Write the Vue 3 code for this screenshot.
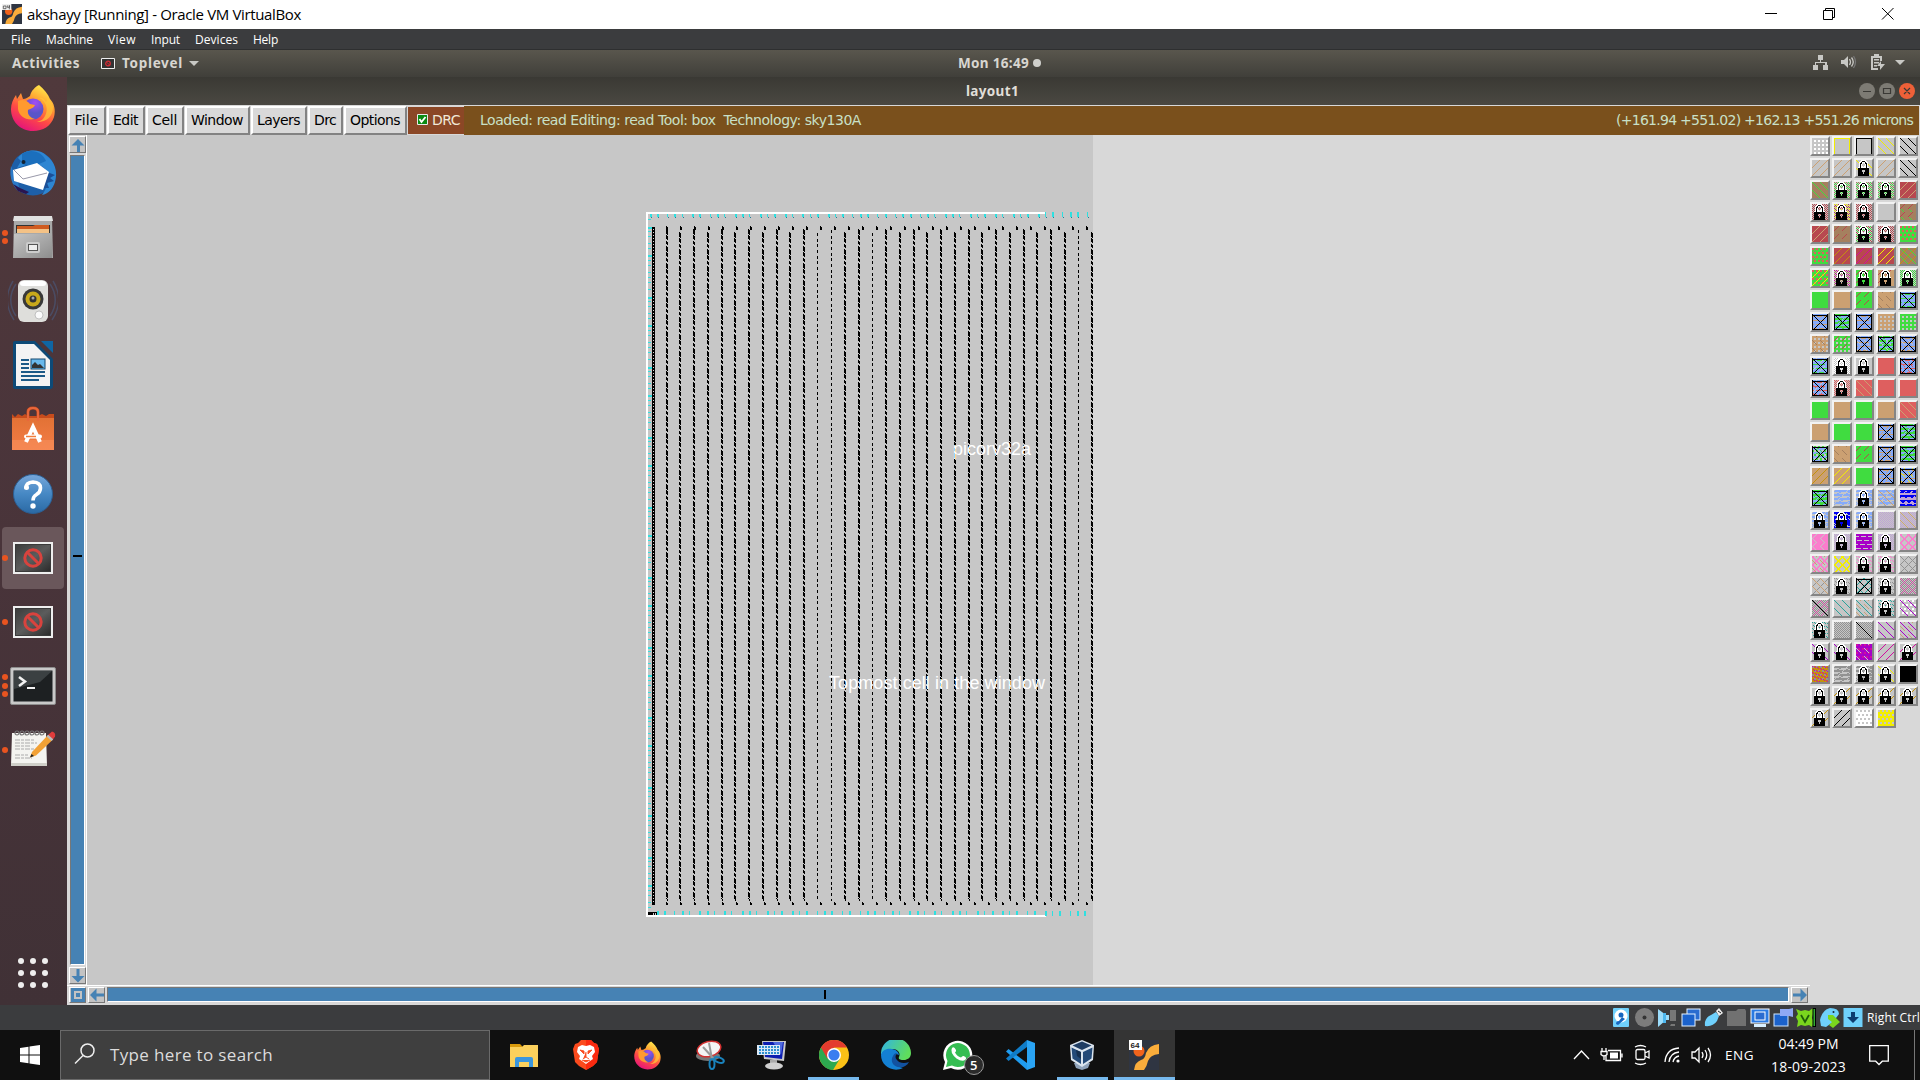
<script setup>
// Sets the letter spacing so a label fills its slot exactly
const vFit = {
  mounted(el, { value }) {
    const natural = el.getBoundingClientRect().width
    el.style.letterSpacing = (value - natural) / el.textContent.length + 'px'
  },
}

const vmMenu = [['File', 20], ['Machine', 47], ['View', 28], ['Input', 29], ['Devices', 43], ['Help', 25]]
const toolMenu = [['File', 38, 24], ['Edit', 38, 25], ['Cell', 38, 25], ['Window', 65, 52], ['Layers', 56, 43], ['Drc', 35, 22], ['Options', 63, 50]]

const firefox = `<svg viewBox="0 0 48 48"><defs><linearGradient id="ff1" x1=".8" y1="0" x2=".3" y2="1"><stop offset="0" stop-color="#fff44f"/><stop offset=".35" stop-color="#ffa030"/><stop offset=".65" stop-color="#ff4a45"/><stop offset="1" stop-color="#e3127d"/></linearGradient><radialGradient id="ff2" cx=".6" cy=".2"><stop offset="0" stop-color="#a24df5"/><stop offset="1" stop-color="#5a55c8"/></radialGradient></defs><path d="M30 1c5 4 9 9 11 14 4 4 6 11 4 18C42 42 34 47 24 47 11 47 2 37 2 25c0-5 2-10 5-14l1 4 4-6 2 6c3 0 5-2 7-3 1-5 5-9 9-11z" fill="url(#ff1)"/><circle cx="24" cy="25" r="10.5" fill="url(#ff2)"/><path d="M9 17c4-2 9-1 12 3l5 1c-1 3-5 4-7 5-1 5 3 8 7 9-9 2-16-3-17-10z" fill="#ff9a2e"/><path d="M30 14c7 3 10 11 6 18-2 4-5 5-8 6 10 0 16-6 16-15-1-5-4-8-6-10 0 3 0 4-1 5-2-4-4-5-7-4z" fill="#ffc438" opacity=".75"/></svg>`
const toplevel = `<svg viewBox="0 0 40 32"><defs><linearGradient id="tg" x2="1" y2="1"><stop stop-color="#3c3c3c"/><stop offset=".5" stop-color="#5c5c5c"/><stop offset="1" stop-color="#2c2c2c"/></linearGradient></defs><rect width="40" height="32" fill="#eee"/><rect x="2" y="2" width="36" height="28" fill="#3a3a3a"/><rect x="3" y="3" width="34" height="26" fill="url(#tg)"/><circle cx="20" cy="16" r="8.200" fill="none" stroke="#d8433e" stroke-width="3"/><path d="M14.500 10.500l11 11" stroke="#d8433e" stroke-width="3"/></svg>`

const dock = [
  { h: 48, w: 48, dots: 0, up: 1, svg: firefox },
  { h: 50, w: 50, dots: 0, svg: `<svg viewBox="0 0 50 50"><circle cx="25" cy="25" r="22.500" fill="#1d5fa8"/><path d="M3 18C1 30 5 40 12 44l-2-10z" fill="#2b7ac8"/><path d="M10 10C16 1 31 0 39 8c8 6 11 16 8 26-2 7-7 12-13 13 6-8 8-17 3-26-5-6-14-6-19-4l-9 3 4-7z" fill="#2e86d2"/><path d="M14 6c8-6 20-3 24 7l-14 6-10-3z" fill="#1b6fbd"/><path d="M39 24l8 3-5 3 4 3-7 2 2 5-7 0z" fill="#1b4f97"/><path d="M5 22l24-7 12 9-6 18-29-9z" fill="#fff"/><path d="M6 22l9 9 24-6" fill="none" stroke="#99a" stroke-width="1"/><circle cx="15.500" cy="14" r="2" fill="#123"/><path d="M5 36l7 4 9 4-3 2-8-3z" fill="#2a1550"/></svg>` },
  { h: 46, w: 44, dots: 2, svg: `<svg viewBox="0 0 44 46"><defs><linearGradient id="fg" x2="1" y2="1"><stop stop-color="#c4c4c4"/><stop offset="1" stop-color="#8d8d8d"/></linearGradient></defs><path d="M3 2h38l1 42H2z" fill="#a9a9a9"/><path d="M3 2h38l1 5H2z" fill="#e1e1e1"/><path d="M5 11h34v8H5z" fill="#333"/><path d="M6 12h16l2-1h14v7H6z" fill="#cf5b20"/><path d="M6 15h32v4H6z" fill="#f4c286"/><path d="M3 20h38v24H3z" fill="url(#fg)"/><rect x="15" y="28" width="14" height="11" rx="2" fill="#ccc"/><rect x="17.500" y="30.500" width="9" height="6" fill="#eee" stroke="#555"/></svg>` },
  { h: 46, w: 50, dots: 0, svg: `<svg viewBox="0 0 50 46"><g fill="none" stroke="#4a5675" stroke-opacity=".7" stroke-width="1.500"><path d="M8 6C1 16 1 28 8 38M42 6c7 10 7 22 0 32M5 3C-3 16-2 30 6 42M45 3c8 13 7 27-1 39"/></g><rect x="10" y="2" width="30" height="42" rx="6" fill="#dededb"/><rect x="12" y="3" width="26" height="5" rx="3" fill="#fff"/><circle cx="25" cy="21" r="10.500" fill="#383838"/><circle cx="25" cy="21" r="7.500" fill="#c9a91b"/><circle cx="25" cy="21" r="3.500" fill="#333"/><circle cx="25" cy="20" r="1.500" fill="#aaa"/><circle cx="31" cy="37" r="4" fill="#fafafa" stroke="#aaa" stroke-width=".7"/></svg>` },
  { h: 48, w: 40, dots: 0, svg: `<svg viewBox="0 0 40 48"><path d="M2 0h20l18 18v27a3 3 0 0 1-3 3H2a2 2 0 0 1-2-2V2a2 2 0 0 1 2-2z" fill="#0d4a77"/><path d="M28 0h12v12z" fill="#0f66a4"/><path d="M3 3h18l16 16v26H3z" fill="#f3f3f3"/><path d="M8 18h8v2H8zm0 4h8v2H8zm0 4h8v2H8zm0 4h24v2H8zm0 4h24v2H8zm0 4h18v2H8z" fill="#1c5a87"/><rect x="18" y="18" width="14" height="10" fill="#69b9ec" stroke="#174a70"/><path d="M19 27v-3l3-3 3 3 2-1 4 4z" fill="#333"/></svg>` },
  { h: 44, w: 42, dots: 0, up: 2, svg: `<svg viewBox="0 0 42 44"><defs><linearGradient id="sg" x2="0" y2="1"><stop stop-color="#e27235"/><stop offset="1" stop-color="#f47c46"/></linearGradient></defs><path d="M16 13V6q0-4 5-4t5 4v7" fill="none" stroke="#c64a1d" stroke-width="3"/><path d="M0 8l3 3 3-3 4 2 3-2 3 2h10l4-2 4 2 3-2 5 0v36H0z" fill="#c84c1c"/><path d="M0 12h42v32H0z" fill="url(#sg)"/><path d="M0 34h42v10H0z" fill="#f8935f" opacity=".5"/><path d="M16 15V6q0-4 5-4t5 4v9" fill="none" stroke="#e9673b" stroke-width="2"/><path d="M14 36l7-15 7 15" fill="none" stroke="#fff" stroke-width="4"/><rect x="12" y="28.500" width="18" height="4" rx="2" fill="#fff"/><path d="M14 30.500h10" stroke="#f27c3b" stroke-width="1.500"/></svg>` },
  { h: 40, w: 40, dots: 0, svg: `<svg viewBox="0 0 40 40"><defs><linearGradient id="hg" x2="0" y2="1"><stop stop-color="#77a7da"/><stop offset=".5" stop-color="#4688c4"/><stop offset="1" stop-color="#2a69a4"/></linearGradient></defs><circle cx="20" cy="20" r="19.500" fill="url(#hg)" stroke="#2c5f93"/><path d="M13 14.500q-.5-6 7-6.500 7.500.3 7.500 6 0 4-4 6.500-3.500 2-3.500 6" fill="none" stroke="#fff" stroke-width="3.600"/><circle cx="13.500" cy="13.500" r="2.500" fill="#fff"/><circle cx="20" cy="32" r="2.700" fill="#fff"/></svg>` },
  { h: 32, w: 40, dots: 1, active: true, svg: toplevel },
  { h: 32, w: 40, dots: 1, svg: toplevel },
  { h: 38, w: 46, dots: 3, svg: `<svg viewBox="0 0 46 38"><rect x=".5" y=".5" width="45" height="37" rx="1.500" fill="#c9c9c9" stroke="#8d8d8d"/><rect x="3.500" y="3.500" width="39" height="31" fill="#1d2022"/><path d="M4 4h38L30 15 4 22z" fill="#3b4042"/><path d="M9 10l6 4.500L9 19" fill="none" stroke="#f2f2f2" stroke-width="2.500"/><path d="M17 21h8" stroke="#f2f2f2" stroke-width="2"/></svg>` },
  { h: 38, w: 46, dots: 1, up: 2, svg: `<svg viewBox="0 0 46 38"><path d="M2 4h34l1 33H1z" fill="#f4f4f0"/><path d="M1 34h36v3H1z" fill="#cfcfc8"/><g fill="none" stroke="#777" stroke-width="1.200"><circle cx="7" cy="4" r="2"/><circle cx="12" cy="4" r="2"/><circle cx="17" cy="4" r="2"/><circle cx="22" cy="4" r="2"/><circle cx="27" cy="4" r="2"/><circle cx="32" cy="4" r="2"/></g><path d="M5 11h19M5 14h22M5 17h15M5 20h20M5 26h13M5 29h17" stroke="#aaa" stroke-dasharray="5 1 3 1"/><path d="M22 23L38 6l5 4.500-17 16-6 2z" fill="#f2a134"/><path d="M38 6l4-3.500q4 1 3 5L43 10.500z" fill="#e03c3c"/><path d="M36.500 7.500l1.700-1.700 5 4.500-1.700 1.700z" fill="#bbb"/><path d="M20 28.500l1.500-3.500 2.500 2z" fill="#222"/></svg>` },
]

const tasks = [
  { w: 28, h: 24, svg: `<svg viewBox="0 0 28 24"><path d="M0 1h10l3 3h-4v5H0z" fill="#d99a0b"/><path d="M0 4h12l2-2h14v22H0z" fill="#fbd05c"/><path d="M5 24V16q0-2 2-2h14q2 0 2 2v8h-4v-5H9v5z" fill="#3b96dd"/></svg>` },
  { w: 26, h: 30, svg: `<svg viewBox="0 0 26 30"><path d="M8 0h10l3 3 3 1 2 5-2 13-4 4-7 4-7-4-4-4L0 9l2-5 3-1z" fill="#fb4a1d"/><path d="M13 0h5l3 3 3 1 2 5-2 13-4 4-7 4z" fill="#fb2a10"/><path d="M5 7l4-2 4 1 4-1 4 2 1 5-3 4 1 3-3 2-4 3-4-3-3-2 1-3-3-4z" fill="#fff"/><path d="M7 10l4 1v3zM19 10l-4 1v3zM13 12v5l-3 2M13 17l3 2M9 20l4 2 4-2" fill="#fb4a1d" stroke="#fb4a1d" stroke-width=".9"/></svg>` },
  { w: 29, h: 29, svg: firefox },
  { w: 30, h: 30, svg: `<svg viewBox="0 0 30 30"><ellipse cx="13" cy="16" rx="12" ry="5" fill="#777"/><ellipse cx="14" cy="9" rx="12" ry="7.500" transform="rotate(-14 14 9)" fill="#f4f4f4" stroke="#d33131" stroke-width="1.500"/><path d="M8 7l11 12M14 3l3 16" stroke="#999" stroke-width="2"/><g fill="none" stroke="#1a83bd" stroke-width="2"><ellipse cx="17" cy="24" rx="2.500" ry="5"/><ellipse cx="24" cy="20" rx="5" ry="2.500" transform="rotate(20 24 20)"/></g></svg>` },
  { w: 30, h: 30, svg: `<svg viewBox="0 0 30 30"><path d="M5 1h24l-2 20-20-2z" fill="#c9c9c9"/><path d="M6 2h21l-2 17-17-2z" fill="#0c1db0"/><path d="M16 2h10l-2 13z" fill="#4f6ae0"/><path d="M0 5h23v10H0z" fill="#dce9f5"/><path d="M2 7h20M2 10h20M2 13h20" stroke="#2f8fd0" stroke-width="1.800" stroke-dasharray="2 1"/><path d="M13 20h7v5h-7z" fill="#aaa"/><ellipse cx="17" cy="26" rx="9" ry="3.500" fill="#d0d0d0"/></svg>` },
  { w: 30, h: 30, run: 51, svg: `<svg viewBox="0 0 30 30"><circle cx="15" cy="15" r="15" fill="#fbc116"/><path d="M15 15L2 7.500A15 15 0 0 0 14 30l7-11.500z" fill="#2da94f"/><path d="M2 7.500A15 15 0 0 1 28 7.500H15L8.500 18.700z" fill="#e33b2e"/><circle cx="15" cy="15" r="7" fill="#fff"/><circle cx="15" cy="15" r="5.600" fill="#3a7ef0"/></svg>` },
  { w: 30, h: 30, svg: `<svg viewBox="0 0 30 30"><defs><linearGradient id="eg" x2="1" y2=".4"><stop stop-color="#2fb2ea"/><stop offset="1" stop-color="#5fdd5c"/></linearGradient></defs><path d="M0 14A15 15 0 0 1 30 13c0 5-4 7-7 7-4 0-6-1-5-3 2-5-2-8-7-8-6 0-10 3-11 7z" fill="url(#eg)"/><path d="M0 15c1-5 6-7 11-6 3 0 7 3 7 6-3-2-6 0-6 4 0 6 6 8 10 9-10 5-22-2-22-13z" fill="#1480d3"/><path d="M12 16c-3 5 0 10 5 11 5 1 9-1 11-5-5 2-10 1-12-2-2-2-2-4 0-7-2 0-3 1-4 3z" fill="#1252a0"/></svg>` },
  { w: 30, h: 30, badge: '5', svg: `<svg viewBox="0 0 30 30"><path d="M0 30l2-8A14.500 14.500 0 1 1 8 28z" fill="#fff"/><path d="M3 27l1.500-6A12 12 0 1 1 9 25.500z" fill="#35bd52"/><path d="M9 8q2-2 4 2 .5 1-1 2.500 2 4 6 5 1.500-2 2.500-1.500 4 1.500 2 3.500-3 3-9-1-7-6-4.500-10.500z" fill="#fff"/></svg>` },
  { w: 30, h: 30, svg: `<svg viewBox="0 0 30 30"><path d="M22 30l8-3V3l-8-3z" fill="#2aa4f4"/><path d="M1 11.500L3.500 9 22 23v7z" fill="#1f9cf0"/><path d="M1 18.500L3.500 21 22 7V0z" fill="#0f7cc8"/></svg>` },
  { w: 26, h: 30, run: 51, svg: `<svg viewBox="0 0 26 30"><path d="M5 23h16l-2 5-6 2-6-2z" fill="#8fa3bb"/><path d="M13 0l12 5-1 15-11 7-11-7L1 5z" fill="#dbe5ef"/><path d="M13 1.500l9.500 4L13 10 3.500 5.500z" fill="#1f3d63"/><path d="M2.500 7.500L12 12v12L3.500 18.500zM23.500 7.500L14 12v12l8.500-5.500z" fill="#234a78"/><path d="M7 10l5 2v7l-4-3z" fill="#16304f"/></svg>` },
  { w: 30, h: 30, run: 61, active: true, svg: `<svg viewBox="0 0 30 30"><rect width="30" height="30" fill="#2f3542"/><circle cx="10" cy="11" r="5.500" fill="#f0631c"/><path d="M30 4v10q-9 1-11 7-1 5-4 9H5q1-8 7-10 4-1 5-7 3-8 13-9z" fill="#f9ac3c"/><rect width="13" height="10" fill="#fff"/><text x="1.500" y="8" font-size="8" font-weight="700" font-family="Liberation Sans, sans-serif" fill="#222">64</text></svg>` },
]

const vmStatus = [
  `<rect x="2" y="0" width="16" height="19" rx="1" fill="#6fd0fb"/><circle cx="10" cy="8" r="6.500" fill="#fff"/><circle cx="10" cy="7" r="2.500" fill="#1666c0"/><path d="M11 9l3 2-7 6-2-1q0-3 3-3z" fill="#1666c0"/>`,
  `<circle cx="10.500" cy="9.500" r="9.500" fill="#7c7c7c"/><circle cx="10.500" cy="9.500" r="2" fill="#333"/>`,
  `<path d="M1 1l8 6h3v5H9l-8 7z" fill="#9bdcfb"/><path d="M6 5h3v10H6z" fill="#4db7ef"/><path d="M13 2h6v11h-6zM11 12h8M14 16h4v2h-5z" fill="#777"/>`,
  `<rect x="6" y="1" width="13" height="11" fill="#2a6cd0" stroke="#e4f1ff"/><rect x="1" y="6" width="13" height="12" fill="#1b62cc" stroke="#e4f1ff"/>`,
  `<path d="M1 18q-1-8 6-11l5-3 3 4-2 5q-4 6-12 5z" fill="#6fd0fb"/><path d="M12 3l3-3 4 5-4 3z" fill="#eee"/><path d="M14 3l3 2" stroke="#222"/>`,
  `<path d="M0 3h9l2-2h7l1 2v15H0z" fill="#717171"/>`,
  `<rect x="1" y="1" width="18" height="14" fill="#2a7ae2" stroke="#fff"/><rect x="5" y="4" width="10" height="8" fill="#2a6cd0" stroke="#fff"/><path d="M4 16h12v3H4z" fill="#d8efff"/>`,
  `<rect x="1" y="6" width="14" height="12" fill="#1b62cc" stroke="#cfe6ff"/><path d="M7 1h9l4-1v9l-4-1H7z" fill="#8fa9f5"/>`,
  `<path d="M0 1l5 2 4-1 4 1 4-3 0 6-1 4 2 4-2 5-3-2-4 1-4-1-4 2 1-6-2-4 2-3z" fill="#7ad61e"/><path d="M5 7l4 7 4-7" fill="none" stroke="#1d5c0a" stroke-width="1.800"/><rect x="17" y=".5" width="2.500" height="18" fill="#3a3" stroke="#000"/>`,
  `<path d="M0 12Q2 2 10 0q9 0 9 6l-6 8-7 5-5-1z" fill="#6fd0fb"/><path d="M8 7h5l7 7-7 6-4-3 3-3-4-3z" fill="#7ad61e"/><circle cx="13.500" cy="4" r="1" fill="#123"/>`,
  `<rect width="19" height="19" x=".5" fill="#6fd0fb"/><path d="M8 4h4v5h4l-6 6-6-6h4z" fill="#0d3c70"/>`,
]

/* ---- layer palette: "background pattern:colour ..." per swatch ---- */
const colours = {
  _: '#c6c6c6', w: '#ffffff', y: '#f2ee00', k: '#000000', t: '#cba072', g: '#40dc40', b: '#a5805f', r: '#b8484f',
  o: '#c4920c', m: '#d00ea0', c: '#de5f5f', l: '#86abfa', d: '#0000f0', i: '#bfa3d6', p: '#fb7ccd', v: '#a800c8',
  e: '#2aa39b', a: '#929292',
}
const mod = (n, k) => ((n % k) + k) % k
const patterns = {
  D: (x, y) => mod(x - y, 8) === 0,
  U: (x, y) => mod(x + y, 8) === 7,
  d: (x, y) => mod(x - y + 4, 8) === 0 && mod(x, 8) < 5,
  u: (x, y) => mod(x + y, 8) === 4 && mod(x, 8) < 5,
  G: (x, y) => mod(x, 4) > 1 && mod(y, 4) > 1,
  g: (x, y) => mod(x + (mod(y, 8) < 4 ? 0 : 2), 4) < 2 && mod(y, 4) < 2,
  K: (x, y) => (x + y) % 2 === 0,
  k: (x, y) => (x + y) % 2 === 0 && mod(x * 3 + y, 5) < 2,
  W: (x, y) => mod(y, 4) < 2 ? mod(x + y, 13) !== 0 : mod(x + 2 * y, 9) < 2,
  w: (x, y) => mod(y, 4) === 2 && mod(x + y, 7) < 5,
  T: (x, y) => mod(y, 5) < 3 && mod(x + (mod(y, 10) < 5 ? 0 : 3), 6) >= mod(y, 5) && mod(x + (mod(y, 10) < 5 ? 0 : 3), 6) < 6 - mod(y, 5),
  O: (x, y) => [0, 1].includes(mod(x + y, 8)) || [0, 7].includes(mod(x - y, 8)),
  o: (x, y) => mod(x + y, 8) === 0 || mod(x - y, 8) === 0,
  B: (x, y) => y === 0 || x === 0 || x === 15,
  X: (x, y) => y === 1 || y === 15 || x === 0 || x === 15 || x === y || x + y === 16,
  N: (x, y) => x === y,
}
const lockMap = [
  '.....WWWWW......', '....WWBBBWW.....', '...WWBWWWBWW....', '...WBBW.WBBW....', '...WBW...WBW....', '...WBW...WBW....', '...WBWW.WWBW....',
  '..WWBWWWWWBWW...', '..BBBBBBBBBBB...', '..BBBBBBBBBBB...', '..BBBB...BBBB...', '..BBBB...BBBB...', '..BBBBB.BBBBB...', '..BBBBB.BBBBB...', '..BBBBBBBBBBB...', '..BBBBBBBBBBB...',
]
const runs = (test) => {
  let d = ''
  for (let y = 0; y < 16; y++)
    for (let x = 0; x < 16; x++) {
      if (!test(x, y)) continue
      let n = 1
      while (x + n < 16 && test(x + n, y)) n++
      d += `M${x} ${y}h${n}v1h-${n}z`
      x += n
    }
  return d
}
const rows = [
  '_ G:w|_ B:y|_ B:k|_ D:y|_ D:k',
  '_ U:t|_ U:t|_ D:y L|_ U:t|_ D:k',
  'b D:g|_ K:g k:b L|_ K:g k:b L|_ K:g k:b L|r U:t',
  '_ K:r L|_ K:r k:y L|_ K:r L|_|b d:g u:r',
  'r U:t|b u:r|_ K:g k:r L|_ K:r L|g g:c',
  'g g:c u:b|r U:o|r U:m|r U:y|b D:g U:o',
  'g g:c U:y|_ K:b k:m L|g u:r L|t u:r L|_ K:g L',
  'g|t|g u:r|t d:b|l w:g X:k',
  'l w:t X:k|l W:g X:k|l w:t X:k|t G:_|g G:_',
  't G:_ d:b|g G:_ u:r|l w:t d:_ X:k|l W:g d:_ X:k|l w:t d:_ X:k',
  'l w:g u:_ X:k|_ K:w L|_ L|c|l w:c d:c X:k',
  'l w:c d:c u:_ X:k|_ K:c L|c D:t|c|c',
  'g|t|g|t|c D:t',
  't|g|g|l w:t u:t X:k|l W:g X:k',
  'l W:g g:_ X:k|t d:b|g u:r|l w:t u:t X:k|l W:g X:k',
  't U:o|t U:y|g|l w:t u:t X:k|l w:t d:y X:k',
  'l W:g d:g X:k|_ W:l|_ W:l L|_ W:l D:t|i T:d w:d',
  '_ W:l L|_ T:d W:d L|_ W:l L|_ K:i|_ K:i D:t',
  'p d:_ u:_|_ K:i L|v w:_ |_ K:i L|_ O:p',
  '_ O:p d:t|_ O:y|_ k:p L|_ k:p L|_ o:a',
  '_ o:a D:t|_ k:a L|_ D:e U:e X:k|_ k:a L|a K:_ o:p',
  'a K:_ o:p N:k|_ D:e|_ D:e d:t|_ k:e L|_ g:w D:v',
  '_ k:e L|_ K:a|_ K:a N:k|_ D:v|_ D:v d:t',
  '_ D:v L|_ D:v L|v g:m d:_|_ U:m|_ U:m L',
  'o g:a k:m|_ W:a|_ W:a L|_ D:y L|k',
  '_ L|_ U:o L|_ U:o L|_ U:o L|_ U:o L',
  '_ U:o L|_ U:k|w g:_|y g:_',
]
const swatches = rows.flatMap((row) => row.split('|')).map((spec) => {
  const [bg, ...layers] = spec.trim().split(' ')
  const paths = []
  for (const layer of layers) {
    if (layer === 'L') {
      paths.push({ d: runs((x, y) => lockMap[y][x] === 'W'), fill: '#fff' })
      paths.push({ d: runs((x, y) => lockMap[y][x] === 'B'), fill: '#000' })
    } else {
      const [p, c] = layer.split(':')
      paths.push({ d: runs(patterns[p]), fill: colours[c] })
    }
  }
  return { bg: colours[bg], paths }
})

/* ---- chip layout drawn on the canvas ---- */
const thin = [817, 831, 872, 1078]
const columns = [666, 679, 693, 707, 721, 734, 748, 762, 776, 789, 803, 817, 831, 844, 858, 872, 885, 899, 913, 926, 940, 954, 968, 981, 995, 1009, 1023, 1036, 1050, 1064, 1078, 1091]
  .map((x, i) => ({ x, thin: thin.includes(x), top: 229 + (i % 2 ? 3 : 0) }))
const marks = Array.from({ length: 31 }, (_, i) => 666 + i * 14)
const topTicks = [33, 54, 85, 106, 129, 160, 181, 213, 235, 256, 288, 309, 331, 363, 384, 406, 438, 459, 490, 513, 535, 567, 588, 609, 640, 663, 684, 715, 738, 769, 790, 813, 842, 865, 886, 918, 939, 961, 993, 1014, 1036, 1068, 1089, 1122, 1143, 1164, 1197, 1218, 1239, 1270, 1293, 1314, 1345].map((v) => 639 + Math.round(v / 3))
const bottomTicks = [54, 75, 106, 129, 150, 181, 204, 225, 256, 277, 309, 331, 352, 384, 406, 427, 459, 480, 502, 534, 555, 576, 609, 630, 663, 684, 705, 736, 759, 780, 811, 834, 855, 886, 907, 939, 961, 982, 1014, 1036, 1058, 1089, 1110, 1132, 1164, 1185, 1218, 1239, 1260, 1293, 1314, 1335].map((v) => 639 + Math.round(v / 3))
// Every third tick or so collapses to a single pixel
const tickWidth = (i) => (i % 5 === 2 || i % 5 === 4 ? 1 : 2)
const leftTicks = []
for (let y = 219, i = 0; y < 910; i++) {
  leftTicks.push({ y, wide: i % 12 === 1 || i % 12 === 6 })
  y += [8, 4, 5, 7, 5, 7, 5, 5, 7, 5, 5, 7][i % 12]
}
</script>

<template>
  <div class="screen">
    <header class="titlebar">
      <svg class="appicon" viewBox="0 0 30 30"><rect width="30" height="30" fill="#2f3542" /><circle cx="10" cy="11" r="5.5" fill="#f0631c" /><path d="M30 4v10q-9 1-11 7-1 5-4 9H5q1-8 7-10 4-1 5-7 3-8 13-9z" fill="#f9ac3c" /><rect width="14" height="9" fill="#eee" /><path d="M2 3h4v4H2zM8 2v3h3V2v6" fill="none" stroke="#333" /></svg>
      <span v-fit="274" class="title">akshayy [Running] - Oracle VM VirtualBox</span>
      <svg class="winctl" width="130" height="14" viewBox="0 0 130 14" fill="none" stroke="#000"><path d="M0 6.500h12M58.500 3.500h9v9h-9zM60.500 3.500v-2h9v9h-2M117 1l11.500 11.500M128.500 1L117 12.500" /></svg>
    </header>
    <nav class="vmmenu"><span v-for="[t, w] in vmMenu" :key="t"><b v-fit="w">{{ t }}</b></span></nav>

    <div class="panel">
      <span v-fit="68" class="act">Activities</span>
      <svg class="mini" width="14" height="11" viewBox="0 0 14 11"><path d="M.5.5h13v10H.5z" fill="#333" stroke="#eee" /><circle cx="7" cy="5.500" r="2.300" fill="none" stroke="#d22c35" stroke-width="1.300" /><path d="M5.500 4l3 3" stroke="#d22c35" /></svg>
      <span v-fit="61" class="top">Toplevel</span>
      <svg class="caret" width="10" height="5"><path d="M0 0h10L5 5z" fill="#c8c8c4" /></svg>
      <div class="clock"><span v-fit="71">Mon 16:49</span><i></i></div>
      <svg class="tray" width="94" height="18" viewBox="0 0 94 18" fill="#c8c8c4">
        <path d="M5 1h5v5H8v2h6v3h1v5h-5v-5h2V9H3v2h2v5H0v-5h2V8h5V6H5z" />
        <path d="M28 6h3l4-4v12l-4-4h-3z" /><path d="M36.500 5q2 3 0 6M38.500 3.500q3.500 4.500 0 9" fill="none" stroke="#c8c8c4" stroke-width="1.300" /><path d="M40.500 2q4 6 0 12" fill="none" stroke="#777" stroke-width="1.300" />
        <path d="M61 0h5v2h3v5h-2V4h-7v10h5v2h-7V2h3zM61 5h5v1.500h-5zm0 3h5v1.500h-5zm0 3h3v1.500h-3zM68 7v3h4l-5 6v-4h-3z" />
        <path d="M82 6h10l-5 5z" />
      </svg>
    </div>

    <div class="desktop">
      <aside class="dock">
        <div v-for="(d, i) in dock" :key="i" class="slot" :class="{ active: d.active }">
          <div class="dots"><i v-for="n in d.dots" :key="n"></i></div>
          <div class="ico" :style="{ width: d.w + 'px', height: d.h + 'px', marginBottom: (d.up || 0) * 2 + 'px' }" v-html="d.svg"></div>
        </div>
        <div class="apps"><i v-for="n in 9" :key="n"></i></div>
      </aside>

      <section class="window">
        <div class="wtitle">
          <span v-fit="53">layout1</span>
          <svg class="wctl" width="60" height="18" viewBox="0 0 60 18"><circle cx="9" cy="9" r="8" fill="#7d7b74" /><circle cx="29" cy="9" r="8" fill="#7d7b74" /><circle cx="49" cy="9" r="8" fill="#ee6038" /><path d="M5 9.500h8M25.500 6.500h7v5h-7zM46 6l6 6M52 6l-6 6" fill="none" stroke="#3a3935" stroke-width="1.200" /></svg>
        </div>
        <div class="toolbar">
          <button v-for="[t, w, f] in toolMenu" :key="t" :style="{ width: w + 'px' }"><span v-fit="f">{{ t }}</span></button>
          <div class="drc"><svg width="11" height="11"><path d="M.5.5h10v10H.5z" fill="#0a8a12" stroke="#e8e8e8" /><path d="M2.500 5l2 3 4-5" fill="none" stroke="#fff" stroke-width="1.800" /></svg><span v-fit="28">DRC</span></div>
          <div class="status"><span v-fit="381">Loaded: read Editing: read Tool: box&nbsp; Technology: sky130A</span><span v-fit="297">(+161.94 +551.02) +162.13 +551.26 microns</span></div>
        </div>
        <div class="body">
          <div class="left">
            <div class="work">
              <div class="vscroll">
                <div class="sb"><svg width="14" height="14"><path d="M7 1l6.500 6.500H9V14H6V7.500H.5z" fill="#4682b4" /></svg></div>
                <div class="trough vt"><i></i></div>
                <div class="sb"><svg width="14" height="14"><path d="M7 13.500L.5 7H5.500V0h3v7h5z" fill="#4682b4" /></svg></div>
              </div>
              <svg class="canvas" width="1723" height="850" viewBox="87 135 1723 850" shape-rendering="crispEdges">
                <rect x="87" y="135" width="1006" height="850" fill="#c7c7c7" />
                <path d="M646 212h400v2H648v701h398v2H646z" fill="#fff" />
                <g v-for="c in columns" :key="c.x">
                  <path v-if="!c.thin" :d="`M${c.x + 0.5} ${c.top}V899`" stroke="#000" stroke-dasharray="5 1 4 2 3 2" />
                  <path :d="`M${c.x + (c.thin ? 0.5 : 1.5)} ${c.top + 1}V901`" stroke="#000" :stroke-dasharray="c.thin ? '3 3 3 2 3 3' : '5 1 4 2 3 2'" />
                </g>
                <path v-for="x in marks" :key="x" :d="`M${x} 226h1v1h1v3h-2zM${x} 902h1v1h1v2h-2z`" />
                <rect x="652" y="227" width="3" height="678" />
                <path d="M653.500 229V904" stroke="#d8d8d8" stroke-dasharray="1 2" />
                <path v-for="(x, i) in topTicks" :key="x" :d="`M${x} ${x > 1044 ? 212 : 214}h${tickWidth(i)}V217h-${tickWidth(i)}z`" fill="#2fe0e0" />
                <path v-for="x in topTicks" :key="x" :d="`M${x + 1} 217h1v1h-1z`" fill="#207f9a" />
                <path v-for="(x, i) in bottomTicks" :key="x" :d="`M${x} 911h${tickWidth(i)}v${x > 1044 ? 5 : 4}h-${tickWidth(i)}z`" fill="#2fe0e0" />
                <path v-for="t in leftTicks" :key="t.y" :d="`M648 ${t.y}h${t.wide ? 4 : 3}v${t.wide ? 2 : 1}h-${t.wide ? 4 : 3}z`" fill="#2fe0e0" />
                <path d="M648 912h9v3h-9z" /><path d="M653 913h1v2h-1zM655 913h1v2h-1z" fill="#ccc" />
                <text x="953" y="455" textLength="78">picorv32a</text>
                <text x="829" y="689" textLength="216">Topmost cell in the window</text>
              </svg>
            </div>
            <div class="hscroll">
              <div class="sb"><svg width="14" height="14"><path fill-rule="evenodd" d="M0 0h14v14H0zM3 3v8h8V3zM5 5h4v4H5z" fill="#4682b4" /></svg></div>
              <div class="sb"><svg width="14" height="14"><path d="M0 7L6.500.5v5H14v3H6.500v5z" fill="#4682b4" /></svg></div>
              <div class="trough ht"><i></i></div>
              <div class="sb"><svg width="14" height="14"><path d="M14 7L7.500.5v5H0v3h7.500v5z" fill="#4682b4" /></svg></div>
            </div>
          </div>
          <div class="palette">
            <div v-for="(s, i) in swatches" :key="i" class="sw" :style="{ background: s.bg }">
              <svg width="16" height="16" shape-rendering="crispEdges"><path v-for="(p, j) in s.paths" :key="j" :d="p.d" :fill="p.fill" /></svg>
            </div>
          </div>
        </div>
      </section>
    </div>

    <div class="vmstatus">
      <svg v-for="(s, i) in vmStatus" :key="i" width="20" height="20" viewBox="0 0 20 20" v-html="s"></svg>
      <span v-fit="53">Right Ctrl</span>
    </div>

    <footer class="taskbar">
      <div class="start"><svg width="20" height="20"><path d="M0 3l8.500-1.300V9.500H0zM9.500 1.500L20 0v9.500H9.500zM0 10.500h8.500v7.800L0 17zM9.500 10.500H20V20L9.500 18.500z" fill="#fff" /></svg></div>
      <div class="search"><svg width="22" height="22" fill="none" stroke="#eee" stroke-width="1.500"><circle cx="13.500" cy="7.500" r="6.500" /><path d="M9 12.500L1 20.500" /></svg><span v-fit="163">Type here to search</span></div>
      <div class="tasks">
        <div v-for="(t, i) in tasks" :key="i" class="task" :class="{ on: t.active }">
          <div class="ico" :style="{ width: t.w + 'px', height: t.h + 'px' }" v-html="t.svg"></div>
          <b v-if="t.badge">{{ t.badge }}</b>
          <u v-if="t.run" :style="{ width: t.run + 'px' }"></u>
        </div>
      </div>
      <svg class="systray" width="150" height="24" viewBox="0 0 150 24" fill="none" stroke="#fff" stroke-width="1.300">
        <path d="M2 16l7.500-8 7.500 8" />
        <path d="M36 7.500h12.500v10H34v-5M50 10.500v4" /><path d="M38 9.500h8v6h-8z" fill="#fff" stroke="none" /><path d="M30 5v3M34 5v3M29 8.500h6v3q-3 3-6 0zM32 13v4" />
        <path d="M64 8q0-1.500 1.500-1.500h6q1.500 0 1.500 1.500v7q0 1.500-1.500 1.500h-6Q64 16.500 64 15zM73 10l4-2v7l-4-2M63 4q5.500-3 11 0M63 20q5.500 3 11 0" />
        <path d="M93 19Q94 6 107 5M97 19q1-9 10-10M101 19q1-5 6-6" /><circle cx="106" cy="18" r="1.600" fill="#fff" stroke="none" />
        <path d="M120 9h3l4-4v14l-4-4h-3zM130 9q2 3 0 6M133 7q3.500 5 0 10M136 5q5 7 0 14" />
      </svg>
      <span v-fit="29" class="eng">ENG</span>
      <div class="time"><span v-fit="60">04:49 PM</span><span v-fit="75">18-09-2023</span></div>
      <svg class="note" width="20" height="21" fill="none" stroke="#fff" stroke-width="1.300"><path d="M.7.700h18.600v15.500h-6L10 19.500l-3.300-3.300h-6z" /></svg>
      <div class="peek"></div>
    </footer>
  </div>
</template>

<style>
body { background: #3b3c3e; overflow: hidden; }
.ico svg { display: block; width: 100%; height: 100%; }
</style>
<style scoped>
* { box-sizing: border-box; }
.screen { width: 1920px; height: 1080px; display: flex; flex-direction: column; overflow: hidden; font-family: "Open Sans", "Noto Sans", sans-serif; white-space: nowrap; }
svg { display: block; flex: none; }
.titlebar { height: 29px; background: #fff; display: flex; align-items: center; padding: 0 25px 1px 2px; }
.appicon { width: 20px; height: 20px; margin-right: 5px; }
.title { font-size: 15px; color: #000; }
.winctl { margin-left: auto; }
.vmmenu { height: 21px; background: #3b3c3e; color: #fff; font-size: 12px; display: flex; align-items: center; gap: 15px; padding-left: 11px; border-bottom: 1px solid #2e2f30; }
.vmmenu b { font-weight: 400; }
.panel { height: 27px; background: linear-gradient(#59564d, #403f3a); display: flex; align-items: center; padding: 0 13px 1px 12px; color: #d8d6d0; font: 700 13.500px "Noto Sans", sans-serif; position: relative; }
.mini { margin: 0 8px 0 21px; }
.top { margin-left: -1px; }
.caret { margin-left: 6px; }
.clock { position: absolute; left: 958px; display: flex; align-items: center; gap: 4px; }
.clock i { width: 8px; height: 8px; border-radius: 50%; background: #d0d0cc; }
.tray { margin-left: auto; }
.desktop { display: flex; height: 928px; }
.dock { width: 67px; background: linear-gradient(#50393c, #49343a 50%, #403136); display: flex; flex-direction: column; }
.slot { height: 64.100px; display: flex; align-items: center; justify-content: center; position: relative; }
.slot.active::before { content: ''; position: absolute; left: 2px; top: 1px; width: 62px; height: 62px; border-radius: 4px; background: #6a575b; }
.slot .ico { position: relative; margin-right: 1px; }
.dots { position: absolute; left: 2px; display: flex; flex-direction: column; gap: 2.500px; }
.dots i { width: 6px; height: 6px; border-radius: 50%; background: #e95420; }
.apps { display: grid; grid-template-columns: repeat(3, 6px); gap: 6px; margin: auto 0 17px 18px; }
.apps i { width: 6px; height: 6px; border-radius: 50%; background: #eee; }
.window { width: 1853px; background: #d8d8d8; display: flex; flex-direction: column; }
.wtitle { height: 28px; background: linear-gradient(#3a3934, #4a4842); display: flex; align-items: center; justify-content: flex-end; padding-right: 2px; color: #e0ded8; font: 700 13.500px "Noto Sans", sans-serif; }
.wtitle span { margin-right: 839px; }
.toolbar { height: 30px; display: flex; gap: 1px; padding: 1px 1px 0 1px; font: 14px "DejaVu Sans", sans-serif; }
.toolbar button { font: inherit; color: #000; padding: 0 1px 2px 0; height: 29px; background: #d9d9d9; border: 2px solid; border-color: #fff #828282 #828282 #fff; }
.drc { width: 56px; background: #8b4726; color: #f0e8d8; display: flex; align-items: center; gap: 4px; padding: 0 0 2px 9px; height: 27px; margin-top: 1px; }
.status { flex: 1; background: #7a501c; color: #c9e0c8; display: flex; align-items: center; justify-content: space-between; padding: 0 6px 2px 16px; margin-left: -1px; }
.body { display: flex; flex: 1; }
.left { width: 1743px; }
.work { display: flex; height: 850px; }
.vscroll { width: 20px; padding: 1px 0 1px 2px; border-right: 1px solid #fff; display: flex; flex-direction: column; }
.sb { width: 17px; height: 17px; background: #c3c3c3; border: 1px solid; border-color: #fff #777 #777 #fff; display: flex; align-items: center; justify-content: center; flex: none; }
.trough { background: #4682b4; border: 1px solid; border-color: #777 #fff #fff #777; display: flex; }
.vt { width: 15px; margin: 2px 0 2px 1px; flex: 1; }
.vt i { width: 9px; height: 2px; background: #000; margin: 399px 0 0 2px; }
.canvas text { fill: #fff; font: 18px "Liberation Sans", sans-serif; }
.hscroll { display: flex; height: 20px; padding: 1px 2px 0 2px; gap: 2px; border-top: 1px solid #fff; }
.hscroll .sb { height: 16px; }
.ht { flex: 1; height: 15px; }
.ht i { width: 2px; height: 9px; background: #000; margin: 2px 0 0 716px; }
.palette { width: 110px; padding-top: 1px; display: grid; grid-template-columns: repeat(5, 20px); grid-auto-rows: 20px; gap: 2px; align-content: start; }
.sw { border: 2px solid; border-color: #f2f2f2 #858585 #858585 #f2f2f2; }
.vmstatus { height: 25px; background: #3b3c3e; display: flex; align-items: center; justify-content: flex-end; gap: 3.200px; color: #fff; font-size: 12px; padding-right: 0; }
.vmstatus span { margin-left: 1px; }
.taskbar { height: 50px; background: #101010; display: flex; color: #fff; align-items: center; }
.start { width: 60px; display: flex; justify-content: center; }
.search { width: 430px; height: 50px; background: #3f3f3f; border: 1px solid #6a6a6a; display: flex; align-items: center; padding: 0 0 2px 13px; gap: 14px; color: #dcdcdc; font-size: 17px; }
.tasks { display: flex; padding-left: 3px; height: 50px; }
.task { width: 61px; margin-right: 1.100px; display: flex; align-items: center; justify-content: center; position: relative; }
.task.on { background: #343434; }
.task u { position: absolute; bottom: 0; height: 3px; background: #76b9ed; }
.task b { position: absolute; left: 36px; top: 25px; width: 20px; height: 20px; border-radius: 50%; border: 1px solid #999; background: #2b2b2b; font: 600 13px/18px "Open Sans", sans-serif; text-align: center; }
.systray { margin-left: auto; }
.eng { font-size: 13.500px; margin-left: 3px; }
.time { width: 75px; margin: 0 0 0 17px; display: flex; flex-direction: column; align-items: center; font-size: 14px; line-height: 23px; }
.note { margin: 0 25px 0 23px; }
.peek { width: 6px; height: 50px; border-left: 1px solid #777; }
</style>
